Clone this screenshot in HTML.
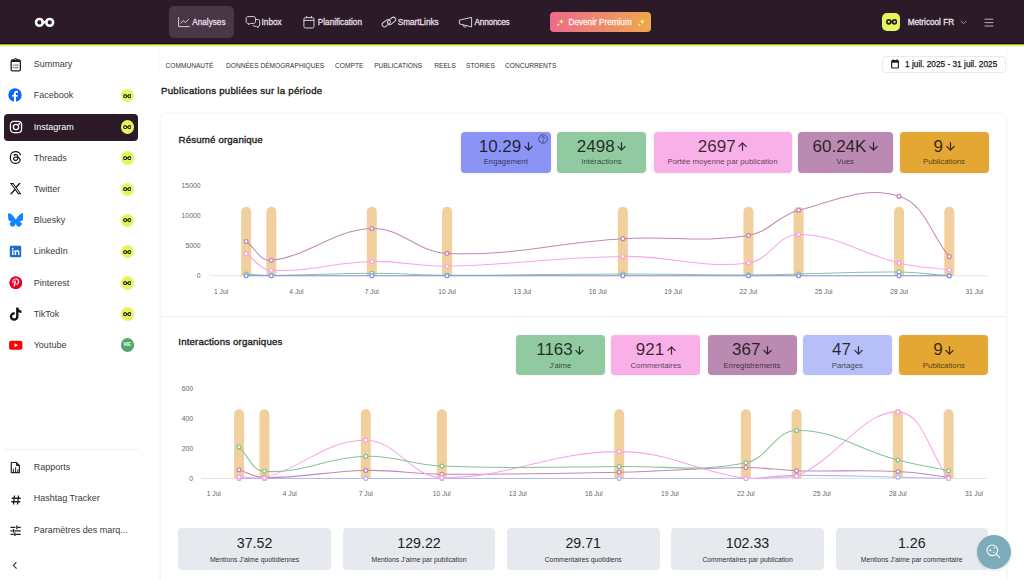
<!DOCTYPE html>
<html><head><meta charset="utf-8"><style>
*{margin:0;padding:0;box-sizing:border-box}
html,body{width:1024px;height:579px;overflow:hidden;background:#fff;font-family:'Liberation Sans', sans-serif}
body{position:relative}
.st{position:absolute;font-size:9px;line-height:12px;color:#3b3b3b;white-space:nowrap}
.nv{position:absolute;font-size:8.2px;line-height:11px;color:#e4dee4;white-space:nowrap;font-weight:normal;-webkit-text-stroke:0.3px #e4dee4;letter-spacing:0px}
.tb{position:absolute;font-size:6.6px;line-height:9px;color:#333;white-space:nowrap}
.h2{position:absolute;font-size:9.7px;line-height:14px;color:#222;white-space:nowrap;font-weight:normal;-webkit-text-stroke:0.35px #222;letter-spacing:0.25px}
.h3{position:absolute;font-size:9.7px;line-height:12px;color:#1e1e1e;white-space:nowrap;font-weight:normal;-webkit-text-stroke:0.35px #1e1e1e;letter-spacing:0.15px}
.dt{position:absolute;font-size:8.3px;line-height:11px;color:#1a1a1a;white-space:nowrap;font-weight:normal;-webkit-text-stroke:0.25px #1a1a1a}
.sb{position:absolute;border-radius:4px;text-align:center;box-shadow:0 0 2.5px rgba(0,0,0,0.10)}
.sv{position:absolute;left:0;right:0;top:4.9px;height:20px;font-size:17px;line-height:20px;color:rgba(0,0,0,0.78);white-space:nowrap;display:flex;justify-content:center;align-items:flex-start}
.ar{margin-left:2.6px;margin-top:5.6px}
.sl{position:absolute;left:0;right:0;top:25.2px;font-size:7.8px;line-height:10px;color:rgba(0,0,0,0.68);white-space:nowrap}
.yl{position:absolute;font-size:6.8px;line-height:10px;color:#666;white-space:nowrap;text-align:right}
.xl{position:absolute;width:40px;text-align:center;font-size:6.7px;line-height:10px;color:#666;white-space:nowrap}
.bb{position:absolute;top:527.8px;width:152.5px;height:42px;border-radius:4px;background:#e6e9ee;text-align:center}
.bv{position:absolute;left:0;right:0;top:7.4px;font-size:14.2px;line-height:16px;color:#222}
.bl{position:absolute;left:0;right:0;top:27.7px;font-size:6.8px;line-height:9px;color:#333}
</style></head><body>
<div style="position:absolute;left:160px;top:40px;width:847px;height:34px;background:#fff;box-shadow:0 0 3px rgba(0,0,0,0.07)"></div>
<div style="position:absolute;left:150px;top:74px;width:870px;height:20px;background:#fff"></div>
<div class="tb" style="left:165.5px;top:60.6px;width:48.2px">COMMUNAUTÉ</div>
<div class="tb" style="left:226px;top:60.6px;width:97px">DONNÉES DÉMOGRAPHIQUES</div>
<div class="tb" style="left:335.1px;top:60.6px;width:27.1px">COMPTE</div>
<div class="tb" style="left:374.2px;top:60.6px;width:48.3px">PUBLICATIONS</div>
<div class="tb" style="left:434.3px;top:60.6px;width:20px">REELS</div>
<div class="tb" style="left:466px;top:60.6px;width:27.3px">STORIES</div>
<div class="tb" style="left:505px;top:60.6px;width:50.1px">CONCURRENTS</div>
<div class="h2" style="left:161px;top:84.3px">Publications publiées sur la période</div>
<div style="position:absolute;left:882px;top:56px;width:124px;height:17px;border:1px solid #e6e9ee;border-radius:4px;background:#fff"></div>
<svg style="position:absolute;left:890.5px;top:58.8px" width="8" height="10" viewBox="0 0 8 10"><rect x="0.65" y="1.6" width="6.8" height="7.4" rx="1" fill="none" stroke="#222" stroke-width="1.2"/><path d="M0.6 2.4Q0.6 1.2 1.6 1.2H6.5Q7.5 1.2 7.5 2.4V3.7H0.6Z" fill="#222"/><path d="M2.2 0.3v1.8M5.9 0.3v1.8" stroke="#222" stroke-width="1"/></svg>
<div class="dt" style="left:905px;top:59px">1 juil. 2025 - 31 juil. 2025</div>
<div style="position:absolute;left:161px;top:114px;width:845px;height:470px;border-radius:5px;background:#fff;box-shadow:0 0 4px rgba(0,0,0,0.08)"></div>
<div style="position:absolute;left:161px;top:316px;width:845px;height:1px;background:#eef1f4"></div>
<div class="h3" style="left:178.6px;top:134px">Résumé organique</div>
<div class="h3" style="left:178.3px;top:336.1px">Interactions organiques</div>
<div class="sb" style="left:461px;top:132px;width:89.5px;height:41px;background:#8b94f4"><div class="sv" style="margin-top:0px"><span>10.29</span><svg class="ar" width="9" height="9" viewBox="0 0 9 9" fill="none" stroke="rgba(0,0,0,0.75)" stroke-width="1.25"><path d="M4.5 0.2V8.3M0.5 4.1L4.5 8.1L8.5 4.1"/></svg></div><div class="sl" style="margin-top:0px">Engagement</div><svg style="position:absolute;left:77px;top:2.3px" width="10" height="10" viewBox="0 0 10 10" fill="none" stroke="rgba(0,0,0,0.6)" stroke-width="0.8"><circle cx="5" cy="5" r="4.3"/><path d="M3.7 3.9a1.3 1.3 0 1 1 1.9 1.1c-.4.2-.6.5-.6.9v.3"/><circle cx="5" cy="7.4" r="0.35" fill="rgba(0,0,0,0.6)"/></svg></div>
<div class="sb" style="left:557px;top:132px;width:89px;height:41px;background:#91caa1"><div class="sv" style="margin-top:0px"><span>2498</span><svg class="ar" width="9" height="9" viewBox="0 0 9 9" fill="none" stroke="rgba(0,0,0,0.75)" stroke-width="1.25"><path d="M4.5 0.2V8.3M0.5 4.1L4.5 8.1L8.5 4.1"/></svg></div><div class="sl" style="margin-top:0px">Intéractions</div></div>
<div class="sb" style="left:653.5px;top:132px;width:138px;height:41px;background:#f9b0e8"><div class="sv" style="margin-top:0px"><span>2697</span><svg class="ar" width="9" height="9" viewBox="0 0 9 9" fill="none" stroke="rgba(0,0,0,0.75)" stroke-width="1.25"><path d="M4.5 8.8V0.7M0.5 4.9L4.5 0.9L8.5 4.9"/></svg></div><div class="sl" style="margin-top:0px">Portée moyenne par publication</div></div>
<div class="sb" style="left:798px;top:132px;width:94.5px;height:41px;background:#bb8ab2"><div class="sv" style="margin-top:0px"><span>60.24K</span><svg class="ar" width="9" height="9" viewBox="0 0 9 9" fill="none" stroke="rgba(0,0,0,0.75)" stroke-width="1.25"><path d="M4.5 0.2V8.3M0.5 4.1L4.5 8.1L8.5 4.1"/></svg></div><div class="sl" style="margin-top:0px">Vues</div></div>
<div class="sb" style="left:899.5px;top:132px;width:89px;height:41px;background:#e5a734"><div class="sv" style="margin-top:0px"><span>9</span><svg class="ar" width="9" height="9" viewBox="0 0 9 9" fill="none" stroke="rgba(0,0,0,0.75)" stroke-width="1.25"><path d="M4.5 0.2V8.3M0.5 4.1L4.5 8.1L8.5 4.1"/></svg></div><div class="sl" style="margin-top:0px">Publications</div></div>
<div class="sb" style="left:515.6px;top:334.8px;width:89.4px;height:40px;background:#91caa1"><div class="sv" style="margin-top:0.4px"><span>1163</span><svg class="ar" width="9" height="9" viewBox="0 0 9 9" fill="none" stroke="rgba(0,0,0,0.75)" stroke-width="1.25"><path d="M4.5 0.2V8.3M0.5 4.1L4.5 8.1L8.5 4.1"/></svg></div><div class="sl" style="margin-top:0.8px">J'aime</div></div>
<div class="sb" style="left:611.3px;top:334.8px;width:89px;height:40px;background:#f9b0e8"><div class="sv" style="margin-top:0.4px"><span>921</span><svg class="ar" width="9" height="9" viewBox="0 0 9 9" fill="none" stroke="rgba(0,0,0,0.75)" stroke-width="1.25"><path d="M4.5 8.8V0.7M0.5 4.9L4.5 0.9L8.5 4.9"/></svg></div><div class="sl" style="margin-top:0.8px">Commentaires</div></div>
<div class="sb" style="left:707.5px;top:334.8px;width:89px;height:40px;background:#bb8ab2"><div class="sv" style="margin-top:0.4px"><span>367</span><svg class="ar" width="9" height="9" viewBox="0 0 9 9" fill="none" stroke="rgba(0,0,0,0.75)" stroke-width="1.25"><path d="M4.5 0.2V8.3M0.5 4.1L4.5 8.1L8.5 4.1"/></svg></div><div class="sl" style="margin-top:0.8px">Enregistrements</div></div>
<div class="sb" style="left:802.7px;top:334.8px;width:89.3px;height:40px;background:#b7bff8"><div class="sv" style="margin-top:0.4px"><span>47</span><svg class="ar" width="9" height="9" viewBox="0 0 9 9" fill="none" stroke="rgba(0,0,0,0.75)" stroke-width="1.25"><path d="M4.5 0.2V8.3M0.5 4.1L4.5 8.1L8.5 4.1"/></svg></div><div class="sl" style="margin-top:0.8px">Partages</div></div>
<div class="sb" style="left:899.4px;top:334.8px;width:89px;height:40px;background:#e5a734"><div class="sv" style="margin-top:0.4px"><span>9</span><svg class="ar" width="9" height="9" viewBox="0 0 9 9" fill="none" stroke="rgba(0,0,0,0.75)" stroke-width="1.25"><path d="M4.5 0.2V8.3M0.5 4.1L4.5 8.1L8.5 4.1"/></svg></div><div class="sl" style="margin-top:0.8px">Publications</div></div>
<svg style="position:absolute;left:0;top:0" width="1024" height="579" viewBox="0 0 1024 579">
<line x1="209" y1="275.8" x2="987" y2="275.8" stroke="#e4e4e4" stroke-width="1"/>
<path d="M241.21,275.80 V211.70 A5,5 0 0 1 251.21,211.70 V275.80 Z" fill="#f1d09d"/>
<path d="M266.32,275.80 V211.70 A5,5 0 0 1 276.32,211.70 V275.80 Z" fill="#f1d09d"/>
<path d="M366.76,275.80 V211.70 A5,5 0 0 1 376.76,211.70 V275.80 Z" fill="#f1d09d"/>
<path d="M442.09,275.80 V211.70 A5,5 0 0 1 452.09,211.70 V275.80 Z" fill="#f1d09d"/>
<path d="M617.86,275.80 V211.70 A5,5 0 0 1 627.86,211.70 V275.80 Z" fill="#f1d09d"/>
<path d="M743.41,275.80 V211.70 A5,5 0 0 1 753.41,211.70 V275.80 Z" fill="#f1d09d"/>
<path d="M793.63,275.80 V211.70 A5,5 0 0 1 803.63,211.70 V275.80 Z" fill="#f1d09d"/>
<path d="M894.07,275.80 V211.70 A5,5 0 0 1 904.07,211.70 V275.80 Z" fill="#f1d09d"/>
<path d="M944.29,275.80 V211.70 A5,5 0 0 1 954.29,211.70 V275.80 Z" fill="#f1d09d"/>
<path d="M246.21,241.50 C256.25,249.02 259.80,261.49 271.32,260.30 C310.02,256.29 331.65,230.08 371.76,228.51 C401.96,227.32 415.93,252.14 447.09,253.41 C516.37,256.21 552.46,242.89 622.86,238.69 C672.99,235.69 699.83,243.28 748.41,235.41 C770.14,231.88 777.14,215.80 798.63,210.21 C837.41,200.12 865.11,185.75 899.07,196.20 C925.37,204.30 929.20,232.44 949.29,256.60" fill="none" stroke="#c089b8" stroke-width="1.05"/>
<circle cx="246.21" cy="241.50" r="1.9" fill="#fff" stroke="#c089b8" stroke-width="1.3"/>
<circle cx="271.32" cy="260.30" r="1.9" fill="#fff" stroke="#c089b8" stroke-width="1.3"/>
<circle cx="371.76" cy="228.51" r="1.9" fill="#fff" stroke="#c089b8" stroke-width="1.3"/>
<circle cx="447.09" cy="253.41" r="1.9" fill="#fff" stroke="#c089b8" stroke-width="1.3"/>
<circle cx="622.86" cy="238.69" r="1.9" fill="#fff" stroke="#c089b8" stroke-width="1.3"/>
<circle cx="748.41" cy="235.41" r="1.9" fill="#fff" stroke="#c089b8" stroke-width="1.3"/>
<circle cx="798.63" cy="210.21" r="1.9" fill="#fff" stroke="#c089b8" stroke-width="1.3"/>
<circle cx="899.07" cy="196.20" r="1.9" fill="#fff" stroke="#c089b8" stroke-width="1.3"/>
<circle cx="949.29" cy="256.60" r="1.9" fill="#fff" stroke="#c089b8" stroke-width="1.3"/>
<path d="M246.21,253.80 C256.25,260.36 259.81,269.50 271.32,270.20 C310.03,272.54 331.55,262.30 371.76,261.40 C401.86,260.73 416.95,266.89 447.09,266.29 C517.39,264.89 552.54,257.19 622.86,256.40 C673.07,255.84 700.23,268.93 748.41,262.90 C770.54,260.13 777.17,234.41 798.63,234.41 C837.43,234.41 858.51,253.32 899.07,262.90 C918.77,267.55 929.20,267.16 949.29,270.00" fill="none" stroke="#f7a6e6" stroke-width="1.05"/>
<circle cx="246.21" cy="253.80" r="1.9" fill="#fff" stroke="#f7a6e6" stroke-width="1.3"/>
<circle cx="271.32" cy="270.20" r="1.9" fill="#fff" stroke="#f7a6e6" stroke-width="1.3"/>
<circle cx="371.76" cy="261.40" r="1.9" fill="#fff" stroke="#f7a6e6" stroke-width="1.3"/>
<circle cx="447.09" cy="266.29" r="1.9" fill="#fff" stroke="#f7a6e6" stroke-width="1.3"/>
<circle cx="622.86" cy="256.40" r="1.9" fill="#fff" stroke="#f7a6e6" stroke-width="1.3"/>
<circle cx="748.41" cy="262.90" r="1.9" fill="#fff" stroke="#f7a6e6" stroke-width="1.3"/>
<circle cx="798.63" cy="234.41" r="1.9" fill="#fff" stroke="#f7a6e6" stroke-width="1.3"/>
<circle cx="899.07" cy="262.90" r="1.9" fill="#fff" stroke="#f7a6e6" stroke-width="1.3"/>
<circle cx="949.29" cy="270.00" r="1.9" fill="#fff" stroke="#f7a6e6" stroke-width="1.3"/>
<path d="M246.21,273.99 C256.25,274.60 261.26,275.56 271.32,275.50 C311.48,275.25 331.59,273.28 371.76,273.21 C401.89,273.16 416.95,275.10 447.09,275.20 C517.39,275.42 552.55,274.06 622.86,273.99 C673.08,273.94 698.19,274.90 748.41,274.90 C768.50,274.90 778.54,274.37 798.63,273.99 C838.81,273.25 858.93,271.62 899.07,272.10 C919.19,272.34 929.20,274.32 949.29,275.80" fill="none" stroke="#86c496" stroke-width="1.05"/>
<circle cx="246.21" cy="273.99" r="1.9" fill="#fff" stroke="#86c496" stroke-width="1.3"/>
<circle cx="271.32" cy="275.50" r="1.9" fill="#fff" stroke="#86c496" stroke-width="1.3"/>
<circle cx="371.76" cy="273.21" r="1.9" fill="#fff" stroke="#86c496" stroke-width="1.3"/>
<circle cx="447.09" cy="275.20" r="1.9" fill="#fff" stroke="#86c496" stroke-width="1.3"/>
<circle cx="622.86" cy="273.99" r="1.9" fill="#fff" stroke="#86c496" stroke-width="1.3"/>
<circle cx="748.41" cy="274.90" r="1.9" fill="#fff" stroke="#86c496" stroke-width="1.3"/>
<circle cx="798.63" cy="273.99" r="1.9" fill="#fff" stroke="#86c496" stroke-width="1.3"/>
<circle cx="899.07" cy="272.10" r="1.9" fill="#fff" stroke="#86c496" stroke-width="1.3"/>
<circle cx="949.29" cy="275.80" r="1.9" fill="#fff" stroke="#86c496" stroke-width="1.3"/>
<path d="M246.21,275.80 C256.25,275.80 261.28,275.80 271.32,275.80 C311.50,275.80 331.58,275.80 371.76,275.80 C401.89,275.80 416.96,275.80 447.09,275.80 C517.40,275.80 552.55,275.80 622.86,275.80 C673.08,275.80 698.19,275.80 748.41,275.80 C768.50,275.80 778.54,275.80 798.63,275.80 C838.81,275.80 858.89,275.80 899.07,275.80 C919.16,275.80 929.20,275.80 949.29,275.80" fill="none" stroke="#8593f2" stroke-width="1.05"/>
<circle cx="246.21" cy="275.80" r="1.9" fill="#fff" stroke="#8593f2" stroke-width="1.3"/>
<circle cx="271.32" cy="275.80" r="1.9" fill="#fff" stroke="#8593f2" stroke-width="1.3"/>
<circle cx="371.76" cy="275.80" r="1.9" fill="#fff" stroke="#8593f2" stroke-width="1.3"/>
<circle cx="447.09" cy="275.80" r="1.9" fill="#fff" stroke="#8593f2" stroke-width="1.3"/>
<circle cx="622.86" cy="275.80" r="1.9" fill="#fff" stroke="#8593f2" stroke-width="1.3"/>
<circle cx="748.41" cy="275.80" r="1.9" fill="#fff" stroke="#8593f2" stroke-width="1.3"/>
<circle cx="798.63" cy="275.80" r="1.9" fill="#fff" stroke="#8593f2" stroke-width="1.3"/>
<circle cx="899.07" cy="275.80" r="1.9" fill="#fff" stroke="#8593f2" stroke-width="1.3"/>
<circle cx="949.29" cy="275.80" r="1.9" fill="#fff" stroke="#8593f2" stroke-width="1.3"/>
</svg>
<div class="yl" style="right:823.5px;top:271.4px">0</div>
<div class="yl" style="right:823.5px;top:241.3px">5000</div>
<div class="yl" style="right:823.5px;top:211.2px">10000</div>
<div class="yl" style="right:823.5px;top:181.1px">15000</div>
<div class="xl" style="left:201.1px;top:286.6px">1 Jul</div>
<div class="xl" style="left:276.4px;top:286.6px">4 Jul</div>
<div class="xl" style="left:351.8px;top:286.6px">7 Jul</div>
<div class="xl" style="left:427.1px;top:286.6px">10 Jul</div>
<div class="xl" style="left:502.4px;top:286.6px">13 Jul</div>
<div class="xl" style="left:577.8px;top:286.6px">16 Jul</div>
<div class="xl" style="left:653.1px;top:286.6px">19 Jul</div>
<div class="xl" style="left:728.4px;top:286.6px">22 Jul</div>
<div class="xl" style="left:803.7px;top:286.6px">25 Jul</div>
<div class="xl" style="left:879.1px;top:286.6px">28 Jul</div>
<div class="xl" style="left:954.4px;top:286.6px">31 Jul</div>
<svg style="position:absolute;left:0;top:0" width="1024" height="579" viewBox="0 0 1024 579">
<line x1="201" y1="478.4" x2="987" y2="478.4" stroke="#e4e4e4" stroke-width="1"/>
<path d="M234.10,478.40 V414.30 A5,5 0 0 1 244.10,414.30 V478.40 Z" fill="#f1d09d"/>
<path d="M259.44,478.40 V414.30 A5,5 0 0 1 269.44,414.30 V478.40 Z" fill="#f1d09d"/>
<path d="M360.80,478.40 V414.30 A5,5 0 0 1 370.80,414.30 V478.40 Z" fill="#f1d09d"/>
<path d="M436.82,478.40 V414.30 A5,5 0 0 1 446.82,414.30 V478.40 Z" fill="#f1d09d"/>
<path d="M614.20,478.40 V414.30 A5,5 0 0 1 624.20,414.30 V478.40 Z" fill="#f1d09d"/>
<path d="M740.90,478.40 V414.30 A5,5 0 0 1 750.90,414.30 V478.40 Z" fill="#f1d09d"/>
<path d="M791.58,478.40 V414.30 A5,5 0 0 1 801.58,414.30 V478.40 Z" fill="#f1d09d"/>
<path d="M892.94,478.40 V414.30 A5,5 0 0 1 902.94,414.30 V478.40 Z" fill="#f1d09d"/>
<path d="M943.62,478.40 V414.30 A5,5 0 0 1 953.62,414.30 V478.40 Z" fill="#f1d09d"/>
<path d="M239.10,478.40 C249.24,478.40 254.30,478.40 264.44,478.40 C304.98,478.40 325.26,478.40 365.80,478.40 C396.21,478.40 411.41,478.40 441.82,478.40 C512.77,478.40 548.25,478.40 619.20,478.40 C669.88,478.40 695.25,478.40 745.90,478.40 C766.20,478.06 776.29,475.55 796.58,475.39 C837.10,475.07 857.40,476.39 897.94,477.20 C918.21,477.60 928.35,477.92 948.62,478.40" fill="none" stroke="#b0b9f6" stroke-width="1.05"/>
<circle cx="239.10" cy="478.40" r="1.9" fill="#fff" stroke="#b0b9f6" stroke-width="1.3"/>
<circle cx="264.44" cy="478.40" r="1.9" fill="#fff" stroke="#b0b9f6" stroke-width="1.3"/>
<circle cx="365.80" cy="478.40" r="1.9" fill="#fff" stroke="#b0b9f6" stroke-width="1.3"/>
<circle cx="441.82" cy="478.40" r="1.9" fill="#fff" stroke="#b0b9f6" stroke-width="1.3"/>
<circle cx="619.20" cy="478.40" r="1.9" fill="#fff" stroke="#b0b9f6" stroke-width="1.3"/>
<circle cx="745.90" cy="478.40" r="1.9" fill="#fff" stroke="#b0b9f6" stroke-width="1.3"/>
<circle cx="796.58" cy="475.39" r="1.9" fill="#fff" stroke="#b0b9f6" stroke-width="1.3"/>
<circle cx="897.94" cy="477.20" r="1.9" fill="#fff" stroke="#b0b9f6" stroke-width="1.3"/>
<circle cx="948.62" cy="478.40" r="1.9" fill="#fff" stroke="#b0b9f6" stroke-width="1.3"/>
<path d="M239.10,469.82 C249.24,472.95 253.95,477.60 264.44,477.65 C304.63,477.84 325.23,471.22 365.80,470.42 C396.19,469.83 411.39,473.97 441.82,474.19 C512.75,474.69 548.27,473.77 619.20,472.23 C669.90,471.13 695.24,467.99 745.90,467.56 C766.19,467.39 776.28,470.20 796.58,470.72 C837.10,471.77 857.48,469.75 897.94,471.48 C918.30,472.34 928.35,474.91 948.62,477.20" fill="none" stroke="#c089b8" stroke-width="1.05"/>
<circle cx="239.10" cy="469.82" r="1.9" fill="#fff" stroke="#c089b8" stroke-width="1.3"/>
<circle cx="264.44" cy="477.65" r="1.9" fill="#fff" stroke="#c089b8" stroke-width="1.3"/>
<circle cx="365.80" cy="470.42" r="1.9" fill="#fff" stroke="#c089b8" stroke-width="1.3"/>
<circle cx="441.82" cy="474.19" r="1.9" fill="#fff" stroke="#c089b8" stroke-width="1.3"/>
<circle cx="619.20" cy="472.23" r="1.9" fill="#fff" stroke="#c089b8" stroke-width="1.3"/>
<circle cx="745.90" cy="467.56" r="1.9" fill="#fff" stroke="#c089b8" stroke-width="1.3"/>
<circle cx="796.58" cy="470.72" r="1.9" fill="#fff" stroke="#c089b8" stroke-width="1.3"/>
<circle cx="897.94" cy="471.48" r="1.9" fill="#fff" stroke="#c089b8" stroke-width="1.3"/>
<circle cx="948.62" cy="477.20" r="1.9" fill="#fff" stroke="#c089b8" stroke-width="1.3"/>
<path d="M239.10,476.89 C249.24,477.32 254.81,478.40 264.44,477.95 C305.49,466.05 326.02,440.24 365.80,440.17 C396.97,440.12 409.28,476.18 441.82,477.65 C510.64,478.40 548.58,451.44 619.20,451.61 C670.21,451.74 694.92,471.35 745.90,478.40 C765.87,478.40 778.51,478.40 796.58,476.14 C839.33,457.44 862.10,411.35 897.94,411.88 C922.91,412.25 928.35,451.79 948.62,478.40" fill="none" stroke="#f7a6e6" stroke-width="1.05"/>
<circle cx="239.10" cy="476.89" r="1.9" fill="#fff" stroke="#f7a6e6" stroke-width="1.3"/>
<circle cx="264.44" cy="477.95" r="1.9" fill="#fff" stroke="#f7a6e6" stroke-width="1.3"/>
<circle cx="365.80" cy="440.17" r="1.9" fill="#fff" stroke="#f7a6e6" stroke-width="1.3"/>
<circle cx="441.82" cy="477.65" r="1.9" fill="#fff" stroke="#f7a6e6" stroke-width="1.3"/>
<circle cx="619.20" cy="451.61" r="1.9" fill="#fff" stroke="#f7a6e6" stroke-width="1.3"/>
<circle cx="745.90" cy="478.40" r="1.9" fill="#fff" stroke="#f7a6e6" stroke-width="1.3"/>
<circle cx="796.58" cy="476.14" r="1.9" fill="#fff" stroke="#f7a6e6" stroke-width="1.3"/>
<circle cx="897.94" cy="411.88" r="1.9" fill="#fff" stroke="#f7a6e6" stroke-width="1.3"/>
<circle cx="948.62" cy="478.40" r="1.9" fill="#fff" stroke="#f7a6e6" stroke-width="1.3"/>
<path d="M239.10,447.10 C249.24,456.79 251.52,470.39 264.44,471.33 C302.20,474.06 325.21,457.48 365.80,456.28 C396.16,455.37 411.24,464.82 441.82,466.06 C512.60,468.92 548.26,467.28 619.20,466.51 C669.89,465.96 697.76,472.51 745.90,462.75 C768.71,458.12 774.53,430.93 796.58,430.54 C835.35,429.85 857.14,449.26 897.94,460.04 C917.96,465.33 928.35,466.45 948.62,470.72" fill="none" stroke="#86c496" stroke-width="1.05"/>
<circle cx="239.10" cy="447.10" r="1.9" fill="#fff" stroke="#86c496" stroke-width="1.3"/>
<circle cx="264.44" cy="471.33" r="1.9" fill="#fff" stroke="#86c496" stroke-width="1.3"/>
<circle cx="365.80" cy="456.28" r="1.9" fill="#fff" stroke="#86c496" stroke-width="1.3"/>
<circle cx="441.82" cy="466.06" r="1.9" fill="#fff" stroke="#86c496" stroke-width="1.3"/>
<circle cx="619.20" cy="466.51" r="1.9" fill="#fff" stroke="#86c496" stroke-width="1.3"/>
<circle cx="745.90" cy="462.75" r="1.9" fill="#fff" stroke="#86c496" stroke-width="1.3"/>
<circle cx="796.58" cy="430.54" r="1.9" fill="#fff" stroke="#86c496" stroke-width="1.3"/>
<circle cx="897.94" cy="460.04" r="1.9" fill="#fff" stroke="#86c496" stroke-width="1.3"/>
<circle cx="948.62" cy="470.72" r="1.9" fill="#fff" stroke="#86c496" stroke-width="1.3"/>
</svg>
<div class="yl" style="right:831px;top:474.0px">0</div>
<div class="yl" style="right:831px;top:443.9px">200</div>
<div class="yl" style="right:831px;top:413.8px">400</div>
<div class="yl" style="right:831px;top:383.7px">600</div>
<div class="xl" style="left:193.8px;top:489.4px">1 Jul</div>
<div class="xl" style="left:269.8px;top:489.4px">4 Jul</div>
<div class="xl" style="left:345.8px;top:489.4px">7 Jul</div>
<div class="xl" style="left:421.8px;top:489.4px">10 Jul</div>
<div class="xl" style="left:497.8px;top:489.4px">13 Jul</div>
<div class="xl" style="left:573.9px;top:489.4px">16 Jul</div>
<div class="xl" style="left:649.9px;top:489.4px">19 Jul</div>
<div class="xl" style="left:725.9px;top:489.4px">22 Jul</div>
<div class="xl" style="left:801.9px;top:489.4px">25 Jul</div>
<div class="xl" style="left:877.9px;top:489.4px">28 Jul</div>
<div class="xl" style="left:954.0px;top:489.4px">31 Jul</div>
<div class="bb" style="left:178.3px"><div class="bv">37.52</div><div class="bl">Mentions J'aime quotidiennes</div></div>
<div class="bb" style="left:342.8px"><div class="bv">129.22</div><div class="bl">Mentions J'aime par publication</div></div>
<div class="bb" style="left:507px"><div class="bv">29.71</div><div class="bl">Commentaires quotidiens</div></div>
<div class="bb" style="left:671.3px"><div class="bv">102.33</div><div class="bl">Commentaires par publication</div></div>
<div class="bb" style="left:835.5px"><div class="bv">1.26</div><div class="bl">Mentions J'aime par commentaire</div></div>
<div style="position:absolute;left:977px;top:534.6px;width:34px;height:34px;border-radius:50%;background:#7cabb9;box-shadow:0 1px 3px rgba(0,0,0,0.15)"></div>
<svg style="position:absolute;left:985px;top:543px" width="18" height="18" viewBox="0 0 18 18" fill="none" stroke="#fff" stroke-width="1.1"><circle cx="7.3" cy="7.3" r="5.3"/><path d="M11.2 11.2L14.9 14.9"/><path d="M5.3 5.6Q5.5 7.1 7 7.3Q5.5 7.5 5.3 9Q5.1 7.5 3.6 7.3Q5.1 7.1 5.3 5.6Z" fill="#fff" stroke="none"/><circle cx="9.2" cy="5" r="0.75" fill="#fff" stroke="none"/><circle cx="8.8" cy="9.3" r="0.75" fill="#fff" stroke="none"/></svg>
<div style="position:absolute;left:0;top:0;width:1024px;height:43px;background:#2c1a29"></div>
<div style="position:absolute;left:0;top:43px;width:1024px;height:4px;background:linear-gradient(#14061f 0 1px,#a3ad45 1px 2px,#e4f853 2px 3px,#f3fdbf 3px 4px)"></div>
<svg style="position:absolute;left:34px;top:17px" width="22" height="11" viewBox="0 0 22 11"><circle cx="5.4" cy="5.4" r="3.4" fill="none" stroke="#fff" stroke-width="2.6"/><circle cx="15.7" cy="5.4" r="3.4" fill="none" stroke="#fff" stroke-width="2.6"/><path d="M8 6.2L13 4.4" stroke="#fff" stroke-width="2.4"/></svg>
<div style="position:absolute;left:169px;top:6px;width:65px;height:32px;border-radius:5px;background:#4a3646"></div>
<div style="position:absolute;left:177px;top:16px;line-height:0"><svg width="14" height="12" viewBox="0 0 14 12" fill="none" stroke="#d6d0d6" stroke-width="1"><path d="M1.6 1.2V10.6H12.6"/><path d="M3.6 7.5L6.3 4.6L8.4 6.5L11.8 3.1"/></svg></div>
<div class="nv" style="left:192.3px;top:16.5px">Analyses</div>
<div style="position:absolute;left:245px;top:15.5px;line-height:0"><svg width="16" height="13" viewBox="0 0 16 13" fill="none" stroke="#d6d0d6" stroke-width="1"><path d="M9.3 3.6h4.1c.8 0 1.3.5 1.3 1.3v4.1c0 .8-.5 1.3-1.3 1.3h-.4v1.6l-1.6-1.6H9.3c-.8 0-1.3-.5-1.3-1.3"/><path d="M2.8 0.6h6.1c.9 0 1.6.7 1.6 1.6v3.6c0 .9-.7 1.6-1.6 1.6H5.2L3.8 8.8V7.4h-1c-.9 0-1.6-.7-1.6-1.6V2.2c0-.9.7-1.6 1.6-1.6z" fill="#2e1b2b"/></svg></div>
<div class="nv" style="left:261.6px;top:16.5px">Inbox</div>
<div style="position:absolute;left:303px;top:16px;line-height:0"><svg width="12" height="13" viewBox="0 0 12 13" fill="none" stroke="#d6d0d6" stroke-width="1"><rect x="0.9" y="1.6" width="10.1" height="10.4" rx="1.6"/><path d="M0.9 4.4h10.1M3.4 0v2.2M8.4 0v2.2"/></svg></div>
<div class="nv" style="left:317.8px;top:16.5px">Planification</div>
<div style="position:absolute;left:381px;top:16px;line-height:0"><svg width="16" height="13" viewBox="0 0 16 13" fill="none" stroke="#d6d0d6" stroke-width="1"><rect x="-4.5" y="-2.3" width="9" height="4.6" rx="2.3" transform="translate(5.2 7.2) rotate(-38)"/><rect x="-4.5" y="-2.3" width="9" height="4.6" rx="2.3" transform="translate(10.6 4.9) rotate(-38)"/></svg></div>
<div class="nv" style="left:397.7px;top:16.5px">SmartLinks</div>
<div style="position:absolute;left:458px;top:16px;line-height:0"><svg width="15" height="13" viewBox="0 0 15 13" fill="none" stroke="#d6d0d6" stroke-width="1"><path d="M1.4 4.1L13.6 1.4V10.9L1.4 7.9Z" stroke-linejoin="round"/><path d="M5.2 8.7C5 10.4 6.2 11.2 7.2 11C8.1 10.8 8.6 10.1 8.5 9.4"/></svg></div>
<div class="nv" style="left:474.6px;top:16.5px;letter-spacing:-0.2px">Annonces</div>
<div style="position:absolute;left:550px;top:12px;width:101px;height:20px;border-radius:4px;background:linear-gradient(90deg,#ec6b8d,#eda84e)"></div>
<div style="position:absolute;left:555.5px;top:17.8px;width:9px;height:9px;line-height:0"><svg width="9" height="9" viewBox="0 0 10 10"><path d="M6 1 Q6.4 3.6 9 4 Q6.4 4.4 6 7 Q5.6 4.4 3 4 Q5.6 3.6 6 1Z" fill="#e9f76a"/><path d="M2.5 5.5 Q2.7 7.3 4.5 7.5 Q2.7 7.7 2.5 9.5 Q2.3 7.7 0.5 7.5 Q2.3 7.3 2.5 5.5Z" fill="#e9f76a"/></svg></div>
<div style="position:absolute;left:636.5px;top:17.8px;width:9px;height:9px;line-height:0"><svg width="9" height="9" viewBox="0 0 10 10"><path d="M6 1 Q6.4 3.6 9 4 Q6.4 4.4 6 7 Q5.6 4.4 3 4 Q5.6 3.6 6 1Z" fill="#e9f76a"/><path d="M2.5 5.5 Q2.7 7.3 4.5 7.5 Q2.7 7.7 2.5 9.5 Q2.3 7.7 0.5 7.5 Q2.3 7.3 2.5 5.5Z" fill="#e9f76a"/></svg></div>
<div class="nv" style="left:568.5px;top:16.5px;color:#fff0ea;-webkit-text-stroke:0.3px #fff0ea">Devenir Premium</div>
<div style="position:absolute;left:882.4px;top:13.1px;width:18px;height:18px;border-radius:5px;background:#e4f75a"><svg style="position:absolute;left:3.3px;top:6.2px" width="11.4" height="5.7" viewBox="0 0 10 5"><circle cx="2.5" cy="2.5" r="1.75" fill="none" stroke="#2e1b2b" stroke-width="1.5"/><circle cx="7.5" cy="2.5" r="1.75" fill="none" stroke="#2e1b2b" stroke-width="1.5"/><path d="M4 3.1L6 1.9" stroke="#2e1b2b" stroke-width="1.5"/></svg></div>
<div class="nv" style="left:907.7px;top:16.5px;color:#e6e0e6;-webkit-text-stroke:0.3px #e6e0e6">Metricool FR</div>
<svg style="position:absolute;left:959.5px;top:19.5px" width="7" height="5" viewBox="0 0 7 5"><path d="M0.8 1L3.5 3.7L6.2 1" fill="none" stroke="#aaa" stroke-width="0.9"/></svg>
<svg style="position:absolute;left:983.5px;top:17.5px" width="10" height="10" viewBox="0 0 10 10"><path d="M0.5 1.2H9.3M0.5 4.6H9.3M0.5 8H9.3" stroke="#b5b0b5" stroke-width="1"/></svg>
<div style="position:absolute;left:4px;top:113.5px;width:134px;height:27px;border-radius:4px;background:#2c1a29"></div>
<div style="position:absolute;left:8.5px;top:57.4px;width:15px;height:14px;line-height:0"><svg style="margin:-0.5px 0 0 1.5px" width="12" height="15" viewBox="0 0 12 15"><rect x="1.15" y="3.1" width="9.2" height="10.8" rx="1.4" fill="none" stroke="#222" stroke-width="1.3"/><path d="M1.2 3.6Q1.2 2.4 2.4 2.4H9.1Q10.3 2.4 10.3 3.6V4.9H1.2Z" fill="#222"/><circle cx="5.75" cy="2.6" r="1.7" fill="#222"/><circle cx="5.75" cy="2.5" r="0.55" fill="#fff"/><path d="M4.6 8.1H8.4M4.6 10.7H8.4" stroke="#444" stroke-width="0.9"/><circle cx="3.2" cy="8.1" r="0.6" fill="#333"/><circle cx="3.2" cy="10.7" r="0.6" fill="#333"/></svg></div>
<div class="st" style="left:33.7px;top:58.1px;color:#3b3b3b">Summary</div>
<div style="position:absolute;left:8.5px;top:88.6px;width:15px;height:14px;line-height:0"><svg style="margin:-0.4px 0 0 -0.6px" width="14" height="14" viewBox="0 0 24 24"><circle cx="12" cy="12" r="11.5" fill="#0866ff"/><path d="M13.6 24V15.2h2.9l.45-3.4H13.6V9.7c0-1 .3-1.7 1.7-1.7h1.8V5c-.3 0-1.4-.13-2.6-.13-2.6 0-4.3 1.6-4.3 4.4v2.5H7.3v3.4h2.9V24z" fill="#fff"/></svg></div>
<div class="st" style="left:33.7px;top:89.3px;color:#3b3b3b">Facebook</div>
<div style="position:absolute;left:120.5px;top:89.0px;width:13.4px;height:13.4px;border-radius:50%;background:#e4f75a"><svg style="position:absolute;left:2.4px;top:4.55px" width="8.6" height="4.3" viewBox="0 0 10 5"><circle cx="2.5" cy="2.5" r="1.75" fill="none" stroke="#2e1b2b" stroke-width="1.3"/><circle cx="7.5" cy="2.5" r="1.75" fill="none" stroke="#2e1b2b" stroke-width="1.3"/><path d="M4 3.1L6 1.9" stroke="#2e1b2b" stroke-width="1.3"/></svg></div>
<div style="position:absolute;left:8.5px;top:119.8px;width:15px;height:14px;line-height:0"><svg width="14" height="14" viewBox="0 0 24 24" fill="none" stroke="#fff" stroke-width="2.2"><rect x="2.5" y="2.5" width="19" height="19" rx="5.5"/><circle cx="12" cy="12" r="4.5"/><circle cx="17.6" cy="6.4" r="0.6" fill="#fff"/></svg></div>
<div class="st" style="left:33.7px;top:120.5px;color:#fff">Instagram</div>
<div style="position:absolute;left:120.5px;top:120.2px;width:13.4px;height:13.4px;border-radius:50%;background:#e4f75a"><svg style="position:absolute;left:2.4px;top:4.55px" width="8.6" height="4.3" viewBox="0 0 10 5"><circle cx="2.5" cy="2.5" r="1.75" fill="none" stroke="#2e1b2b" stroke-width="1.3"/><circle cx="7.5" cy="2.5" r="1.75" fill="none" stroke="#2e1b2b" stroke-width="1.3"/><path d="M4 3.1L6 1.9" stroke="#2e1b2b" stroke-width="1.3"/></svg></div>
<div style="position:absolute;left:8.5px;top:151.0px;width:15px;height:14px;line-height:0"><svg style="margin:0 0 0 0.5px" width="13" height="13" viewBox="0 0 24 24"><path fill="#111" d="M12.186 24h-.007c-3.581-.024-6.334-1.205-8.184-3.509C2.35 18.44 1.5 15.586 1.472 12.01v-.017c.03-3.579.879-6.43 2.525-8.482C5.845 1.205 8.6.024 12.18 0h.014c2.746.02 5.043.725 6.826 2.098 1.677 1.29 2.858 3.13 3.509 5.467l-2.04.569c-1.104-3.96-3.898-5.984-8.304-6.015-2.91.022-5.11.936-6.54 2.717C4.307 6.504 3.616 8.914 3.589 12c.027 3.086.718 5.496 2.057 7.164 1.43 1.783 3.631 2.698 6.54 2.717 2.623-.02 4.358-.631 5.8-2.045 1.647-1.613 1.618-3.593 1.09-4.798-.31-.71-.873-1.3-1.634-1.75-.192 1.352-.622 2.446-1.284 3.272-.886 1.102-2.14 1.704-3.730 1.790-1.202.065-2.361-.218-3.259-.801-1.063-.689-1.685-1.740-1.752-2.964-.065-1.190.408-2.285 1.330-3.082.880-.760 2.119-1.207 3.583-1.291a13.853 13.853 0 0 1 3.020.142c-.126-.742-.375-1.332-.750-1.757-.513-.586-1.308-.883-2.359-.890h-.029c-.844 0-1.992.232-2.721 1.320L7.734 7.847c.980-1.454 2.568-2.256 4.478-2.256h.044c3.194.020 5.097 1.975 5.287 5.388.108.046.216.094.321.142 1.490.700 2.580 1.761 3.154 3.070.797 1.820.871 4.790-1.548 7.158-1.850 1.810-4.094 2.628-7.277 2.650Zm1.003-11.690c-.242 0-.487.007-.739.021-1.836.103-2.980.946-2.916 2.143.067 1.256 1.452 1.839 2.784 1.767 1.224-.065 2.818-.543 3.086-3.710a10.500 10.500 0 0 0-2.215-.221z"/></svg></div>
<div class="st" style="left:33.7px;top:151.7px;color:#3b3b3b">Threads</div>
<div style="position:absolute;left:120.5px;top:151.4px;width:13.4px;height:13.4px;border-radius:50%;background:#e4f75a"><svg style="position:absolute;left:2.4px;top:4.55px" width="8.6" height="4.3" viewBox="0 0 10 5"><circle cx="2.5" cy="2.5" r="1.75" fill="none" stroke="#2e1b2b" stroke-width="1.3"/><circle cx="7.5" cy="2.5" r="1.75" fill="none" stroke="#2e1b2b" stroke-width="1.3"/><path d="M4 3.1L6 1.9" stroke="#2e1b2b" stroke-width="1.3"/></svg></div>
<div style="position:absolute;left:8.5px;top:182.2px;width:15px;height:14px;line-height:0"><svg style="margin:-1.4px 0 0 -0.5px" width="15" height="15" viewBox="0 0 24 24"><path d="M3 3h5.5l4.2 5.9L17.8 3H20.5l-6.6 7.6L21.5 21H16l-4.6-6.4L5.8 21H3.1l7.1-8.1z M6.2 4.6l10.8 14.8h1.6L7.9 4.6z" fill="#111"/></svg></div>
<div class="st" style="left:33.7px;top:182.9px;color:#3b3b3b">Twitter</div>
<div style="position:absolute;left:120.5px;top:182.6px;width:13.4px;height:13.4px;border-radius:50%;background:#e4f75a"><svg style="position:absolute;left:2.4px;top:4.55px" width="8.6" height="4.3" viewBox="0 0 10 5"><circle cx="2.5" cy="2.5" r="1.75" fill="none" stroke="#2e1b2b" stroke-width="1.3"/><circle cx="7.5" cy="2.5" r="1.75" fill="none" stroke="#2e1b2b" stroke-width="1.3"/><path d="M4 3.1L6 1.9" stroke="#2e1b2b" stroke-width="1.3"/></svg></div>
<div style="position:absolute;left:8.5px;top:213.4px;width:15px;height:14px;line-height:0"><svg style="margin:-1.2px 0 0 -0.8px" width="15.6" height="15.6" viewBox="0 0 24 24"><path d="M5.2 3.3C7.9 5.3 10.9 9.5 12 11.8c1.1-2.3 4.1-6.5 6.8-8.5 2-1.4 5.2-2.6 5.2 1 0 .7-.4 6-.7 6.8-.9 3.1-4.1 3.9-6.9 3.4 4.9.8 6.2 3.6 3.5 6.3-5.1 5.2-7.3-1.3-7.9-3-.1-.3-.1-.5-.1-.3 0-.2 0 0-.1.3-.6 1.7-2.8 8.2-7.9 3-2.7-2.7-1.4-5.5 3.5-6.3-2.8.5-6-.3-6.9-3.4C.4 10.3 0 5 0 4.3c0-3.6 3.2-2.4 5.2-1z" fill="#1185fe"/></svg></div>
<div class="st" style="left:33.7px;top:214.1px;color:#3b3b3b">Bluesky</div>
<div style="position:absolute;left:120.5px;top:213.8px;width:13.4px;height:13.4px;border-radius:50%;background:#e4f75a"><svg style="position:absolute;left:2.4px;top:4.55px" width="8.6" height="4.3" viewBox="0 0 10 5"><circle cx="2.5" cy="2.5" r="1.75" fill="none" stroke="#2e1b2b" stroke-width="1.3"/><circle cx="7.5" cy="2.5" r="1.75" fill="none" stroke="#2e1b2b" stroke-width="1.3"/><path d="M4 3.1L6 1.9" stroke="#2e1b2b" stroke-width="1.3"/></svg></div>
<div style="position:absolute;left:8.5px;top:244.6px;width:15px;height:14px;line-height:0"><svg style="margin:0 0 0 0.4px" width="13" height="13" viewBox="0 0 24 24"><rect x="1.5" y="1.5" width="21" height="21" rx="2" fill="#1a6cd0"/><path d="M5.5 9.5h2.8v9H5.5z M6.9 5.2a1.6 1.6 0 1 1 0 3.2 1.6 1.6 0 0 1 0-3.2z M10.3 9.5h2.7v1.3c.4-.7 1.3-1.5 2.8-1.5 3 0 3.5 1.9 3.5 4.4v4.8h-2.8v-4.3c0-1 0-2.4-1.5-2.4s-1.8 1.1-1.8 2.3v4.4h-2.8z" fill="#fff"/></svg></div>
<div class="st" style="left:33.7px;top:245.3px;color:#3b3b3b">LinkedIn</div>
<div style="position:absolute;left:120.5px;top:245.0px;width:13.4px;height:13.4px;border-radius:50%;background:#e4f75a"><svg style="position:absolute;left:2.4px;top:4.55px" width="8.6" height="4.3" viewBox="0 0 10 5"><circle cx="2.5" cy="2.5" r="1.75" fill="none" stroke="#2e1b2b" stroke-width="1.3"/><circle cx="7.5" cy="2.5" r="1.75" fill="none" stroke="#2e1b2b" stroke-width="1.3"/><path d="M4 3.1L6 1.9" stroke="#2e1b2b" stroke-width="1.3"/></svg></div>
<div style="position:absolute;left:8.5px;top:275.8px;width:15px;height:14px;line-height:0"><svg style="margin:0 0 0 0.3px" width="13.5" height="13.5" viewBox="0 0 24 24"><circle cx="12" cy="12" r="11.5" fill="#e60023"/><path d="M12.3 4.5c-4.3 0-6.5 3-6.5 5.6 0 1.5.6 2.9 1.8 3.4.2.1.4 0 .4-.2l.2-.7c.1-.2 0-.3-.1-.5-.4-.4-.6-1-.6-1.8 0-2.3 1.7-4.4 4.5-4.4 2.5 0 3.8 1.5 3.8 3.5 0 2.6-1.2 4.9-2.9 4.9-.9 0-1.6-.8-1.4-1.7.3-1.1.8-2.4.8-3.2 0-.7-.4-1.3-1.2-1.3-1 0-1.7 1-1.7 2.3 0 .8.3 1.4.3 1.4l-1.1 4.6c-.3 1.4 0 3.100.1 3.3h.2c.1-.2 1.3-1.6 1.700-3l.6-2.4c.3.6 1.200 1.100 2.200 1.100 2.900 0 4.800-2.600 4.800-6.200 0-2.700-2.300-5.200-5.800-5.200z" fill="#fff"/></svg></div>
<div class="st" style="left:33.7px;top:276.5px;color:#3b3b3b">Pinterest</div>
<div style="position:absolute;left:120.5px;top:276.2px;width:13.4px;height:13.4px;border-radius:50%;background:#e4f75a"><svg style="position:absolute;left:2.4px;top:4.55px" width="8.6" height="4.3" viewBox="0 0 10 5"><circle cx="2.5" cy="2.5" r="1.75" fill="none" stroke="#2e1b2b" stroke-width="1.3"/><circle cx="7.5" cy="2.5" r="1.75" fill="none" stroke="#2e1b2b" stroke-width="1.3"/><path d="M4 3.1L6 1.9" stroke="#2e1b2b" stroke-width="1.3"/></svg></div>
<div style="position:absolute;left:8.5px;top:307.0px;width:15px;height:14px;line-height:0"><svg style="margin:-1.5px 0 0 -1.6px" width="16.5" height="16.5" viewBox="0 0 24 24"><path d="M16.6 2h-3.3v13.3c0 1.6-1.3 2.900-2.900 2.900s-2.900-1.300-2.900-2.900 1.300-2.900 2.900-2.900c.3 0 .6 0 .9.1V9.100c-.3 0-.6-.1-.9-.1-3.500 0-6.300 2.800-6.300 6.300S6.900 21.600 10.400 21.600s6.300-2.800 6.300-6.300V8.600c1.300.9 2.800 1.400 4.400 1.400V6.700c-2.400 0-4.400-2.100-4.500-4.700z" fill="#111"/></svg></div>
<div class="st" style="left:33.7px;top:307.7px;color:#3b3b3b">TikTok</div>
<div style="position:absolute;left:120.5px;top:307.4px;width:13.4px;height:13.4px;border-radius:50%;background:#e4f75a"><svg style="position:absolute;left:2.4px;top:4.55px" width="8.6" height="4.3" viewBox="0 0 10 5"><circle cx="2.5" cy="2.5" r="1.75" fill="none" stroke="#2e1b2b" stroke-width="1.3"/><circle cx="7.5" cy="2.5" r="1.75" fill="none" stroke="#2e1b2b" stroke-width="1.3"/><path d="M4 3.1L6 1.9" stroke="#2e1b2b" stroke-width="1.3"/></svg></div>
<div style="position:absolute;left:8.5px;top:338.2px;width:15px;height:14px;line-height:0"><svg style="margin:-0.7px 0 0 -1px" width="15.5" height="14.5" viewBox="0 0 24 24"><rect x="1" y="4.5" width="22" height="15" rx="3.5" fill="#ff0000"/><path d="M10 8.6v6.8l5.8-3.4z" fill="#fff"/></svg></div>
<div class="st" style="left:33.7px;top:338.9px;color:#3b3b3b">Youtube</div>
<div style="position:absolute;left:120.5px;top:338.2px;width:13.5px;height:13.5px;border-radius:50%;background:#4fa76b;color:#e2f3e6;font:bold 5.4px/13.4px 'Liberation Sans', sans-serif;text-align:center;letter-spacing:-0.2px">ME</div>
<div style="position:absolute;left:4px;top:449px;width:134px;height:1px;background:#f0f0f0"></div>
<div style="position:absolute;left:9.5px;top:462.4px;width:12px;height:12px;line-height:0"><svg style="margin:-1px 0 0 0.5px" width="12" height="14" viewBox="0 0 12 14"><path d="M1.3 1.5H6.3L9.4 4.6V11.6H1.3Z" fill="none" stroke="#222" stroke-width="1.2" stroke-linejoin="round"/><path d="M6.1 1L10 4.9H6.1Z" fill="#222"/><path d="M3.4 7.8V10.9M5.6 6.2V10.9M7.8 8.4V10.9" stroke="#333" stroke-width="1.1"/></svg></div>
<div class="st" style="left:33.7px;top:461.0px">Rapports</div>
<div style="position:absolute;left:9.5px;top:493.7px;width:12px;height:12px;line-height:0"><svg width="12" height="12" viewBox="0 0 24 24" fill="none" stroke="#222" stroke-width="2.6"><path d="M9 3L7 21M17 3l-2 18M3.5 8.5h18M2.5 15.5h18"/></svg></div>
<div class="st" style="left:33.7px;top:492.3px">Hashtag Tracker</div>
<div style="position:absolute;left:9.5px;top:524.9px;width:12px;height:12px;line-height:0"><svg style="margin:-0.7px 0 0 0.5px" width="12" height="13" viewBox="0 0 12 13"><path d="M0.5 3.4H5.4M7.6 3.4H10.7M0.5 6.8H2.6M4.4 6.8H10.7M0.5 10.3H3.8M5.6 10.3H10.7" stroke="#222" stroke-width="1.2"/><path d="M6.9 1.6V5.2M3.5 5V8.6M4.9 8.5V12.1" stroke="#222" stroke-width="1.4"/></svg></div>
<div class="st" style="left:33.7px;top:523.5px">Paramètres des marq...</div>
<svg style="position:absolute;left:11px;top:560px" width="9" height="11" viewBox="0 0 9 11"><path d="M5.4 2.2L2.3 5.5L5.6 8.6" fill="none" stroke="#3a3a3a" stroke-width="1.1"/></svg>
</body></html>
